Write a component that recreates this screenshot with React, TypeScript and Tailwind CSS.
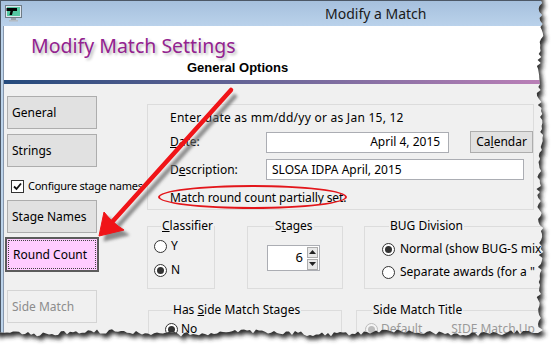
import React from "react";

// deterministic jitter for the torn paper edge
function rng(seed: number) {
  let s = seed;
  return () => {
    s = (s * 9301 + 49297) % 233280;
    return s / 233280;
  };
}

function paperPath() {
  const r = rng(11);
  const pts: string[] = ["-20 -20", "539 -20"];
  for (let y = 0; y <= 330; y += 3) {
    pts.push(`${(537.5 + r() * 5 + Math.sin(y / 17) * 1.2).toFixed(1)} ${y}`);
  }
  for (let x = 538; x >= -20; x -= 3) {
    pts.push(`${x} ${(330.5 + r() * 4.5 + Math.sin(x / 23) * 1.5).toFixed(1)}`);
  }
  return "M" + pts.join(" L") + " Z";
}

const PAPER = paperPath();

function AppIcon() {
  return (
    <svg width="17" height="17" viewBox="0 0 17 17" className="ml-[4px] shrink-0">
      <rect x="0.5" y="0.5" width="16" height="12" fill="#dfe6ee" stroke="#6f7b86" />
      <rect x="2" y="2" width="13" height="9" fill="#55c7a2" />
      <path d="M1.5 3 H12 V6 H8 L7 10 H4.5 L5.5 6 H1.5 Z" fill="#000" />
      <rect x="6" y="13" width="5" height="2" fill="#9aa3ab" />
      <rect x="4" y="15" width="9" height="1.5" fill="#b4bcc4" />
    </svg>
  );
}

function Btn({ children, disabled }: { children: React.ReactNode; disabled?: boolean }) {
  return (
    <div
      className={
        disabled
          ? "flex h-[33px] w-[90px] shrink-0 items-center border border-[#d4d4d4] bg-[#f0f0f0] pl-[4px] text-[#8c8c8c]"
          : "flex h-[33px] w-[90px] shrink-0 items-center border border-[#adadad] bg-[#e1e1e1] pl-[4px]"
      }
    >
      {children}
    </div>
  );
}

function Radio({ checked, disabled }: { checked?: boolean; disabled?: boolean }) {
  return (
    <span
      className={
        disabled
          ? "flex h-[13px] w-[13px] shrink-0 items-center justify-center rounded-full border border-[#bcbcbc] bg-[#f4f4f4]"
          : "flex h-[13px] w-[13px] shrink-0 items-center justify-center rounded-full border border-[#333] bg-white"
      }
    >
      {checked && (
        <span className={disabled ? "h-[7px] w-[7px] rounded-full bg-[#bcbcbc]" : "h-[7px] w-[7px] rounded-full bg-[#333]"} />
      )}
    </span>
  );
}

function Group({ label, className, children }: { label: React.ReactNode; className: string; children?: React.ReactNode }) {
  return (
    <fieldset className={`shrink-0 border border-[#dcdcdc] ${className}`}>
      <legend className="ml-[7px] px-[1px] leading-[16px]">{label}</legend>
      {children}
    </fieldset>
  );
}

export default function App() {
  return (
    <div className="relative h-[355px] w-[559px] overflow-hidden bg-white text-[12px] text-black font-['Noto_Sans',sans-serif]">
      <div className="flex h-[380px] w-[552px] flex-col border-l border-t border-[#4d5866] bg-[#bcd3ea]">
        {/* title bar */}
        <div className="flex h-[25px] shrink-0 items-center bg-linear-to-b from-[#a6c0dd] to-[#bad2eb]">
          <AppIcon />
          <span className="ml-[303px] text-[14px] text-[#1a1a1a]">Modify a Match</span>
        </div>

        <div className="ml-[2px] flex flex-1 flex-col border-l border-[#8797ad] bg-white">
          {/* header */}
          <div className="flex h-[54px] shrink-0 flex-col">
            <div className="pl-[27px] pt-[6px] text-[19.5px] leading-[28px] text-[#93228f] [text-shadow:2px_2px_3px_#b8b8b8]">
              Modify Match Settings
            </div>
            <div className="pl-[183px] text-[13px] font-bold leading-[16px] font-['Liberation_Sans',sans-serif]">
              General Options
            </div>
          </div>
          <div className="h-[4px] shrink-0 bg-linear-to-r from-[#244a7c] via-[#6e689a] to-[#bd80b8]" />

          {/* body */}
          <div className="flex flex-1 bg-[#f0f0f0]">
            <div className="flex w-[143px] shrink-0 flex-col pl-[3px] pt-[12px]">
              <Btn>General</Btn>
              <div className="mt-[5px]">
                <Btn>Strings</Btn>
              </div>
              <div className="mt-[12px] flex h-[14px] items-center">
                <span className="ml-[4px] flex h-[13px] w-[13px] shrink-0 items-center justify-center border border-[#333] bg-white">
                  <svg width="11" height="11" viewBox="0 0 11 11">
                    <path d="M2 5.5 L4.5 8 L9 2.5" fill="none" stroke="#111" strokeWidth="1.8" />
                  </svg>
                </span>
                <span className="ml-[4px] whitespace-nowrap text-[11px] tracking-[-0.25px]">Configure stage names</span>
              </div>
              <div className="mt-[7px]">
                <Btn>Stage Names</Btn>
              </div>
              <div className="mt-[4px] -ml-[2px] h-[35px] w-[94px] shrink-0 border-2 border-[#5c5c5c] bg-[#ffccff] p-[1px]">
                <div className="flex h-full items-center border border-dotted border-[#444] pl-[4px]">Round Count</div>
              </div>
              <div className="mt-[18px]">
                <Btn disabled>Side Match</Btn>
              </div>
            </div>

            <div className="flex flex-col pt-[20px]">
              {/* date / description panel */}
              <div className="h-[106px] w-[387px] shrink-0 border border-[#dcdcdc] pl-[22px] pt-[5px]">
                <div className="leading-[16px] tracking-[0.25px]">Enter date as mm/dd/yy or as Jan 15, 12</div>
                <div className="mt-[5px] flex h-[22px] items-center">
                  <span className="w-[96px]">
                    <u>D</u>ate:
                  </span>
                  <div className="flex h-[21px] w-[184px] items-center justify-end border border-[#abadb3] bg-white pr-[8px]">
                    April 4, 2015
                  </div>
                  <div className="ml-[21px] flex h-[22px] w-[63px] items-center justify-center border border-[#adadad] bg-[#e1e1e1]">
                    Ca<u>l</u>endar
                  </div>
                </div>
                <div className="mt-[6px] flex h-[21px] items-center">
                  <span className="w-[96px]">
                    D<u>e</u>scription:
                  </span>
                  <div className="flex h-[21px] w-[258px] items-center border border-[#abadb3] bg-white pl-[5px]">
                    SLOSA IDPA April, 2015
                  </div>
                </div>
                <div className="mt-[10px] leading-[16px]">
                  <span className="relative tracking-[-0.1px]">
                    Match round count partially set.
                    <span className="absolute -left-[12px] -top-[4px] h-[24px] w-[189px] rounded-[50%] border-2 border-[#e3161b]" />
                  </span>
                </div>
              </div>

              {/* first row of groups */}
              <div className="mt-[8px] flex">
                <Group label={<><u>C</u>lassifier</>} className="h-[71px] w-[67px] pl-[6px]">
                  <div className="mt-[4px] flex h-[16px] items-center gap-[4px]">
                    <Radio />
                    <span>Y</span>
                  </div>
                  <div className="mt-[8px] flex h-[16px] items-center gap-[4px]">
                    <Radio checked />
                    <span>N</span>
                  </div>
                </Group>
                <Group label={<>S<u>t</u>ages</>} className="ml-[32px] h-[71px] w-[96px] pl-[19px]">
                  <div className="mt-[11px] flex h-[26px] w-[53px] items-center border border-[#abadb3] bg-white">
                    <span className="flex-1 pr-[4px] text-right text-[13px]">6</span>
                    <div className="mr-[1px] flex flex-col gap-[1px]">
                      <span className="flex h-[11px] w-[11px] items-center justify-center border border-[#adadad] bg-[#e8e8e8]">
                        <svg width="7" height="4" viewBox="0 0 7 4"><path d="M0 4 L3.5 0 L7 4 Z" fill="#222" /></svg>
                      </span>
                      <span className="flex h-[11px] w-[11px] items-center justify-center border border-[#adadad] bg-[#e8e8e8]">
                        <svg width="7" height="4" viewBox="0 0 7 4"><path d="M0 0 L3.5 4 L7 0 Z" fill="#222" /></svg>
                      </span>
                    </div>
                  </div>
                </Group>
                <Group label="BUG Division" className="ml-[21px] h-[71px] w-[190px] pl-[17px]">
                  <div className="mt-[7px] flex h-[16px] items-center gap-[5px] whitespace-nowrap">
                    <Radio checked />
                    <span>Normal (show BUG-S mix</span>
                  </div>
                  <div className="mt-[7px] flex h-[16px] items-center gap-[5px] whitespace-nowrap">
                    <Radio />
                    <span>Separate awards (for a "</span>
                  </div>
                </Group>
              </div>

              {/* second row of groups */}
              <div className="mt-[13px] flex">
                <Group label={<>Has <u>S</u>ide Match Stages</>} className="ml-[1px] h-[60px] w-[194px] pl-[16px]">
                  <div className="mt-[3px] flex h-[16px] items-center gap-[3px]">
                    <Radio checked />
                    <span>No</span>
                  </div>
                </Group>
                <Group label="Side Match Title" className="ml-[14px] h-[60px] w-[190px] pl-[8px]">
                  <div className="mt-[3px] flex h-[16px] items-center gap-[3px] whitespace-nowrap text-[#9a9a9a]">
                    <Radio checked disabled />
                    <span>Default</span>
                    <span className="ml-[26px]">SIDE Match Up</span>
                  </div>
                </Group>
              </div>
            </div>
          </div>
        </div>
      </div>

      {/* red callout arrow */}
      <svg className="pointer-events-none absolute left-0 top-0" width="559" height="355">
        <defs>
          <filter id="soft" x="-20%" y="-20%" width="140%" height="140%">
            <feGaussianBlur stdDeviation="1.6" />
          </filter>
        </defs>
        <g transform="translate(5 5)" fill="#6b6b6b" stroke="#6b6b6b" opacity="0.75" filter="url(#soft)">
          <line x1="231" y1="90" x2="113" y2="221" strokeWidth="4.5" />
          <path d="M99 236 L104 212 L110 219 L118 226 L124 230 Z" />
        </g>
        <g fill="#f01418" stroke="#f01418">
          <line x1="231" y1="90" x2="113" y2="221" strokeWidth="4.5" strokeLinecap="round" />
          <path d="M99 236 L104 212 L110 219 L118 226 L124 230 Z" strokeWidth="1" strokeLinejoin="round" />
        </g>
      </svg>

      {/* torn paper edge with shadow */}
      <svg className="pointer-events-none absolute left-0 top-0" width="559" height="355">
        <defs>
          <filter id="tear" x="-10%" y="-10%" width="120%" height="120%">
            <feGaussianBlur stdDeviation="2.2" />
          </filter>
          <clipPath id="outside">
            <path clipRule="evenodd" d={`M-30 -30 H600 V400 H-30 Z ${PAPER}`} />
          </clipPath>
        </defs>
        <g clipPath="url(#outside)">
          <rect x="-30" y="-30" width="640" height="430" fill="#fff" />
          <path d={PAPER} transform="translate(3 4)" fill="#2e2e2e" filter="url(#tear)" />
        </g>
      </svg>
    </div>
  );
}
